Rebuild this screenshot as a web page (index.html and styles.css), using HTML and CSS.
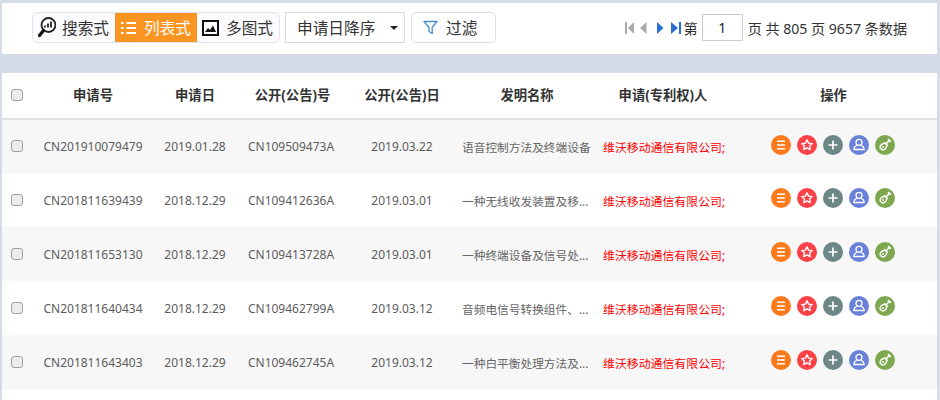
FILE: index.html
```html
<!DOCTYPE html>
<html lang="zh">
<head>
<meta charset="utf-8">
<title>专利列表</title>
<link rel="stylesheet" href="styles.css">
</head>
<body>
<svg class="defs" width="0" height="0" aria-hidden="true">
  <defs>
    <symbol id="i-menu" viewBox="0 0 20 20"><path d="M6 6.300h8M6 10h8M6 13.700h8" fill="none" stroke="#fff" stroke-width="1.500"/></symbol>
    <symbol id="i-star" viewBox="0 0 20 20"><path d="M10 4.800l1.600 3.300 3.600.5-2.600 2.500.6 3.500-3.200-1.700-3.200 1.700.6-3.500-2.600-2.500 3.600-.5z" fill="none" stroke="#fff" stroke-width="1.400" stroke-linejoin="round"/></symbol>
    <symbol id="i-plus" viewBox="0 0 20 20"><path d="M10 5.500v9M5.500 10h9" fill="none" stroke="#fff" stroke-width="1.700"/></symbol>
    <symbol id="i-user" viewBox="0 0 20 20"><circle cx="10" cy="7.300" r="3" fill="none" stroke="#fff" stroke-width="1.300"/><path d="M7.800 10.300c-1.500.8-2.900 1.600-2.900 3.400v.8h10.200v-.8c0-1.800-1.400-2.600-2.900-3.400" fill="none" stroke="#fff" stroke-width="1.300"/></symbol>
    <symbol id="i-guitar" viewBox="0 0 20 20"><path d="M10.500 9.500l3.500-3.700" stroke="#fff" stroke-width="1.500"/><path d="M13 4.300l2.700 2.500" stroke="#fff" stroke-width="1.900"/><path d="M9.800 7.800c-.9 1-2.400.9-3.700 2.100-1.500 1.500-1.200 3.200-.1 4.200 1.100 1.100 2.900 1.300 4.200-.2 1.200-1.200 1-2.700 2-3.600z" fill="none" stroke="#fff" stroke-width="1.400"/><circle cx="8" cy="12" r=".9" fill="#fff"/></symbol>
  </defs>
</svg>
<div class="page">
  <header class="toolbar">
    <div class="views">
      <button class="view">
        <svg class="view-icon" width="18" height="22" viewBox="0 0 18 22"><circle cx="10.500" cy="8" r="7" fill="#fff" stroke="#222" stroke-width="1.800"/><path d="M7 10.500v-2M10 10.500v-4M13 10.500v-6" stroke="#222" stroke-width="1.800"/><path d="M5.500 13.500l-4 5" stroke="#111" stroke-width="3.200" stroke-linecap="round"/></svg>
        <span>搜索式</span>
      </button>
      <button class="view view-on">
        <svg class="view-icon" width="16" height="14" viewBox="0 0 16 14"><path d="M0 2h2.500M0 7h2.500M0 12h2.500" stroke="#fff" stroke-width="2.200"/><path d="M5.500 2H15M5.500 7H15M5.500 12H15" stroke="#fff" stroke-width="2"/></svg>
        <span>列表式</span>
      </button>
      <button class="view">
        <svg class="view-icon" width="17" height="16" viewBox="0 0 17 16"><rect x="1" y="1" width="15" height="14" fill="#fff" stroke="#111" stroke-width="2"/><path d="M3 12l3-4 2 2 3-4.500 3 6.500z" fill="#111"/></svg>
        <span>多图式</span>
      </button>
    </div>
    <div class="sort"><span>申请日降序</span><i class="caret"></i></div>
    <button class="filter">
      <svg width="15" height="15" viewBox="0 0 15 15"><path d="M1 1.500h13L9.200 7.500v6L6 11.500v-4z" fill="none" stroke="#4a8fd0" stroke-width="1.300" stroke-linejoin="round"/></svg>
      <span>过滤</span>
    </button>
    <nav class="pager">
      <svg class="pg" width="11" height="12" viewBox="0 0 11 12"><path d="M1 0h2v12H1z" fill="#aaa"/><path d="M10 0v12L4 6z" fill="#aaa"/></svg>
      <svg class="pg pg-b" width="7" height="12" viewBox="0 0 7 12"><path d="M6.500 0v12L0 6z" fill="#aaa"/></svg>
      <svg class="pg pg-c" width="7" height="12" viewBox="0 0 7 12"><path d="M0 0v12l6.500-6z" fill="#2a6fd0"/></svg>
      <svg class="pg pg-d" width="11" height="12" viewBox="0 0 11 12"><path d="M0 0v12l7-6z" fill="#2a6fd0"/><path d="M8 0h2v12H8z" fill="#2a6fd0"/></svg>
      <span class="pg-l">第</span>
      <span class="pg-input">1</span>
      <span class="pg-text">页 共 805 页 9657 条数据</span>
    </nav>
  </header>
  <main class="panel">
    <table class="grid">
      <colgroup>
        <col class="c-chk"><col class="c-no"><col class="c-date"><col class="c-pub"><col class="c-pdate"><col class="c-title"><col class="c-app"><col class="c-ops">
      </colgroup>
      <thead>
        <tr><th><i class="chk"></i></th><th>申请号</th><th>申请日</th><th class="th-pub">公开(公告)号</th><th>公开(公告)日</th><th class="th-title">发明名称</th><th class="th-app">申请(专利权)人</th><th class="th-ops">操作</th></tr>
      </thead>
      <tbody>
        <tr><td><i class="chk"></i></td><td>CN201910079479</td><td>2019.01.28</td><td>CN109509473A</td><td>2019.03.22</td><td class="title">语音控制方法及终端设备</td><td class="app">维沃移动通信有限公司;</td><td class="ops"><div class="acts"><svg class="a a1"><use href="#i-menu"/></svg><svg class="a a2"><use href="#i-star"/></svg><svg class="a a3"><use href="#i-plus"/></svg><svg class="a a4"><use href="#i-user"/></svg><svg class="a a5"><use href="#i-guitar"/></svg></div></td></tr>
        <tr><td><i class="chk"></i></td><td>CN201811639439</td><td>2018.12.29</td><td>CN109412636A</td><td>2019.03.01</td><td class="title">一种无线收发装置及移...</td><td class="app">维沃移动通信有限公司;</td><td class="ops"><div class="acts"><svg class="a a1"><use href="#i-menu"/></svg><svg class="a a2"><use href="#i-star"/></svg><svg class="a a3"><use href="#i-plus"/></svg><svg class="a a4"><use href="#i-user"/></svg><svg class="a a5"><use href="#i-guitar"/></svg></div></td></tr>
        <tr><td><i class="chk"></i></td><td>CN201811653130</td><td>2018.12.29</td><td>CN109413728A</td><td>2019.03.01</td><td class="title">一种终端设备及信号处...</td><td class="app">维沃移动通信有限公司;</td><td class="ops"><div class="acts"><svg class="a a1"><use href="#i-menu"/></svg><svg class="a a2"><use href="#i-star"/></svg><svg class="a a3"><use href="#i-plus"/></svg><svg class="a a4"><use href="#i-user"/></svg><svg class="a a5"><use href="#i-guitar"/></svg></div></td></tr>
        <tr><td><i class="chk"></i></td><td>CN201811640434</td><td>2018.12.29</td><td>CN109462799A</td><td>2019.03.12</td><td class="title">音频电信号转换组件、...</td><td class="app">维沃移动通信有限公司;</td><td class="ops"><div class="acts"><svg class="a a1"><use href="#i-menu"/></svg><svg class="a a2"><use href="#i-star"/></svg><svg class="a a3"><use href="#i-plus"/></svg><svg class="a a4"><use href="#i-user"/></svg><svg class="a a5"><use href="#i-guitar"/></svg></div></td></tr>
        <tr><td><i class="chk"></i></td><td>CN201811643403</td><td>2018.12.29</td><td>CN109462745A</td><td>2019.03.12</td><td class="title">一种白平衡处理方法及...</td><td class="app">维沃移动通信有限公司;</td><td class="ops"><div class="acts"><svg class="a a1"><use href="#i-menu"/></svg><svg class="a a2"><use href="#i-star"/></svg><svg class="a a3"><use href="#i-plus"/></svg><svg class="a a4"><use href="#i-user"/></svg><svg class="a a5"><use href="#i-guitar"/></svg></div></td></tr>
      </tbody>
    </table>
  </main>
</div>
</body>
</html>
```

FILE: styles.css
```css
* { box-sizing: border-box; }
html, body { margin: 0; height: 100%; }
body {
  width: 940px;
  height: 400px;
  overflow: hidden;
  background: #d5dbe7;
  font-family: "Noto Sans", "Noto Sans CJK SC", sans-serif;
  color: #333;
}
.defs { position: absolute; }
.page { padding: 3px 3px 0 2px; }

.toolbar {
  height: 51px;
  background: #fff;
  display: flex;
  align-items: center;
  padding: 0 0 2px 30px;
  margin-bottom: 19px;
}
.views {
  display: flex;
  height: 31px;
  border: 1px solid #dfe4ee;
  border-radius: 6px;
  background: #fbfbfd;
}
.view {
  border: 0;
  background: none;
  padding: 0;
  height: 29px;
  display: flex;
  align-items: center;
  font: inherit;
  font-size: 15.700px;
  color: #333;
}
.view:nth-child(1) { width: 82px; padding-left: 5px; gap: 6px; }
.view:nth-child(2) { width: 82px; padding-left: 6px; gap: 7px; }
.view:nth-child(3) { width: 82px; padding-left: 5px; gap: 7px; }
.view-on { background: #fb9420; color: #fff; }
.view-icon { flex: none; }

.sort {
  width: 120px;
  height: 31px;
  margin-left: 5px;
  border: 1px solid #d5dbe7;
  display: flex;
  align-items: center;
  justify-content: space-between;
  padding: 0 6px 0 11px;
  font-size: 15.700px;
}
.caret {
  border: 4px solid transparent;
  border-top-color: #222;
  border-bottom: 0;
}
.filter {
  width: 85px;
  height: 31px;
  margin-left: 6px;
  border: 1px solid #d9dfe9;
  border-radius: 5px;
  background: #fff;
  display: flex;
  align-items: center;
  gap: 8px;
  padding: 0 0 0 11px;
  font: inherit;
  font-size: 15.700px;
  color: #333;
}

.pager {
  display: flex;
  align-items: center;
  margin-left: auto;
  padding-right: 30px;
  font-size: 14.100px;
}
.pg-b { margin-left: 5px; }
.pg-c { margin-left: 10px; }
.pg-d { margin-left: 7px; }
.pg-l { margin-left: 2px; }
.pg-input {
  width: 41px;
  height: 27px;
  margin: 0 5px 0 4px;
  border: 1px solid #ccc;
  display: flex;
  align-items: center;
  justify-content: center;
  color: #222;
}
.pg-text { white-space: nowrap; }

.panel { background: #fff; height: 327px; overflow: hidden; }
.grid {
  width: 935px;
  border-collapse: collapse;
  table-layout: fixed;
  font-size: 12px;
  color: #5c5c5c;
  text-align: center;
}
.c-chk { width: 34px; }
.c-no { width: 114px; }
.c-date { width: 90px; }
.c-pub { width: 102px; }
.c-pdate { width: 120px; }
.c-title { width: 139px; }
.c-app { width: 129px; }
.c-ops { width: 207px; }

.grid th {
  height: 46px;
  border-bottom: 2px solid #e0e2e6;
  font-size: 13.300px;
  font-weight: 700;
  color: #333;
  white-space: nowrap;
  padding: 0 0 2px;
}
.grid th.th-pub { padding-left: 3px; }
.grid th.th-title { padding-right: 9px; }
.grid th.th-app { padding-right: 5px; }
.grid thead .chk { margin-bottom: -1px; }
.grid td { height: 54px; padding: 0; white-space: nowrap; }
.grid tbody tr:nth-child(odd) { background: #f7f7f7; }
.grid td.title { text-align: left; color: #666; font-size: 11.700px; }
.grid td.app { text-align: left; padding-left: 2px; color: #f00; font-size: 11.900px; }
.chk {
  display: block;
  width: 12px;
  height: 12px;
  margin: 0 0 1px 9px;
  border: 1px solid #a2a2a2;
  border-radius: 3px;
  background: #ececec;
}
.acts { display: flex; gap: 6px; padding-left: 41px; margin-bottom: 4px; }
.a { width: 20px; height: 20px; border-radius: 50%; flex: none; }
.a1 { background: #fc7a1c; }
.a2 { background: #fb4247; }
.a3 { background: #6d8787; }
.a4 { background: #6a81da; }
.a5 { background: #7ea84f; }
```
